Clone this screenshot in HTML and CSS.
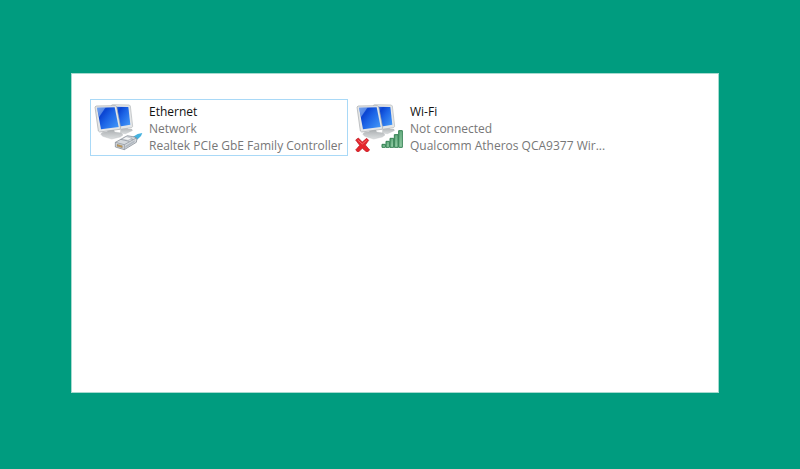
FILE: index.html
```html
<!DOCTYPE html>
<html lang="en">
<head>
<meta charset="utf-8">
<title>Network Connections</title>
<link rel="stylesheet" href="styles.css">
</head>
<body>
<svg class="defs" aria-hidden="true">
<defs>
<linearGradient id="screen" x1="0" y1="0" x2="1" y2=".8">
<stop offset="0" stop-color="#3d7be8" />
<stop offset=".3" stop-color="#0b45d2" />
<stop offset=".55" stop-color="#1c64e6" />
<stop offset="1" stop-color="#3f92f6" />
</linearGradient>
<linearGradient id="bar" x1="0" y1="0" x2="1" y2="1">
<stop offset="0" stop-color="#4f9d6c" />
<stop offset="1" stop-color="#a5d9b5" />
</linearGradient>
<linearGradient id="stand" x1="0" y1="0" x2="0" y2="1">
<stop offset="0" stop-color="#a5a9ac" />
<stop offset="1" stop-color="#dcdfe0" />
</linearGradient>
<g id="monitors">
<path d="M104 98l18-4 4 7 12 1 2 5-22 11-16-3z" fill="url(#stand)" />
<path d="M76 31l3-2 51 1 3 3 7 61-3 4-36 5z" fill="#e4e6e7" stroke="#b4b8bb" stroke-width="2" />
<path d="M82 35l45 1 6 53-36 6z" fill="url(#screen)" />
<path d="M60 104l22-3 4 10 20 3 5 6-8 6-26 6-27-8-6-7 6-5 15-2z" fill="url(#stand)" stroke="#b5b9bc" />
<path d="M27 36l3-3 58-1 4 3 12 64-3 4-60 8-4-3z" fill="#e4e6e7" stroke="#a4a8ab" stroke-width="2" />
<path d="M33 38l53-1 12 59-53 7z" fill="url(#screen)" />
<path d="M33 38l26-1-20 29z" fill="#a4c8f6" opacity=".5" />
</g>
</defs>
</svg>
<main class="panel">
<ul class="connections">
<li><a class="connection selected" href="#ethernet">
<svg class="icon" viewBox="24 21 150 150" aria-hidden="true">
<use href="#monitors" />
<path d="M140 126l15-9 14-3-4 9-10 10-11 4z" fill="#45b2df" />
<path d="M88 142l36-20 22 4 7 5-2 11-36 22-27-8z" fill="#d5d9dd" stroke="#777f88" stroke-width="2" />
<path d="M88 142l27 7 36-20M115 149v15M104 133l26 6M115 127l26 6" fill="none" stroke="#858d96" stroke-width="2" />
<path d="M120 125l18 4-12 7-17-4z" fill="#f5f6f7" stroke="#8e959d" />
<path d="M93 148l16 4v6l-16-4z" fill="#c49a52" stroke="#6e7175" />
<path d="M118 153l28-17v6l-28 17z" fill="#b2b9c1" />
</svg>
<span class="text">
<span class="name">Ethernet</span>
<span>Network</span>
<span>Realtek PCIe GbE Family Controller</span>
</span>
</a></li>
<li><a class="connection" href="#wifi">
<svg class="icon" viewBox="27 21 150 150" aria-hidden="true">
<use href="#monitors" x="6" />
<path d="M29 135l8-6 12 12 13-11 6 6-10 14 13 15-8 7-14-12-13 12-7-7 12-14z" fill="#e5242b" stroke="#b8131c" stroke-width="2" />
<path d="M35 135l14 12 13-11" fill="none" stroke="#f36a6b" stroke-width="3" />
<g fill="url(#bar)" stroke="#338052" stroke-width="3">
<path d="M108 148h10v9h-10z" />
<path d="M120 139h10v18h-10z" />
<path d="M132 130h11v27h-11z" />
<path d="M145 119h11v38h-11z" />
<path d="M158 107h11v50h-11z" />
</g>
</svg>
<span class="text">
<span class="name">Wi-Fi</span>
<span>Not connected</span>
<span>Qualcomm Atheros QCA9377 Wir...</span>
</span>
</a></li>
</ul>
</main>
</body>
</html>
```

FILE: styles.css
```css
* { box-sizing: border-box; }
body { display: flex; min-height: 100vh; margin: 0; padding: 73px 81px 76px 71px; background: #009c7f; font-family: "Open Sans", "Noto Sans", sans-serif; font-size: 12px; line-height: 17px; }
.defs { position: absolute; width: 0; height: 0; }
.panel { flex: 1; min-width: 0; padding: 25px 18px; background: #fff; border: 1px solid #a6dacf; }
.connections { display: flex; flex-wrap: wrap; gap: 3px; margin: 0; padding: 0; list-style: none; }
.connection { display: flex; width: 258px; padding: 1px 3px; border: 1px solid transparent; color: #777; text-decoration: none; white-space: nowrap; }
.connection.selected { border-color: #a9d9f7; }
.icon { flex: none; width: 50px; height: 50px; margin-top: 1px; }
.text { display: flex; flex-direction: column; padding: 2px 0 0 5px; }
.name { color: #111; }
```
